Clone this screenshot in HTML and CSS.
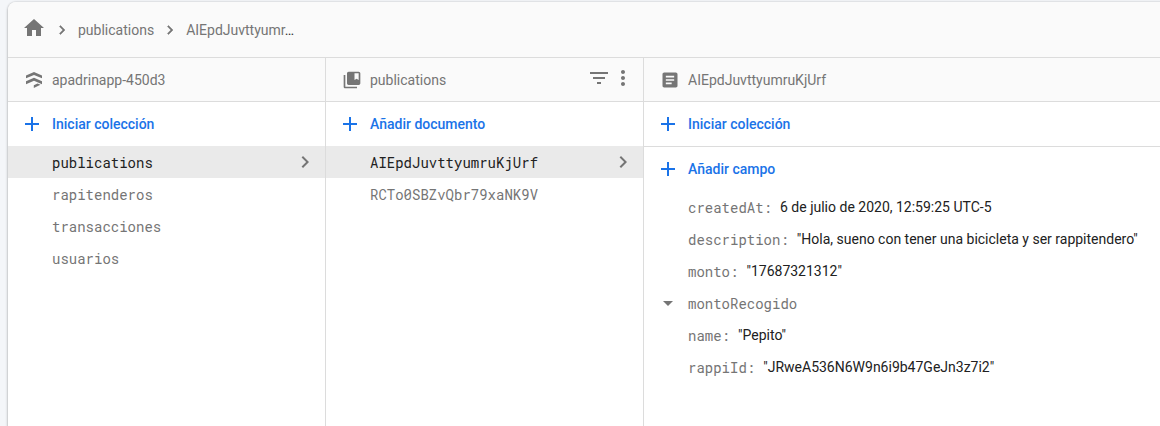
FILE: index.html
```html
<!DOCTYPE html>
<html lang="es">
<head>
<meta charset="utf-8">
<title>Firestore</title>
<link rel="stylesheet" href="styles.css">
</head>
<body>
<svg class="defs" width="0" height="0">
  <symbol id="chevron" viewBox="0 0 24 24"><path d="M10 6 8.59 7.41 13.17 12l-4.58 4.59L10 18l6-6z"/></symbol>
  <symbol id="add" viewBox="0 0 24 24"><path d="M19 13h-6v6h-2v-6H5v-2h6V5h2v6h6v2z"/></symbol>
</svg>
<main class="card">
  <nav class="crumbs">
    <svg class="icon home" viewBox="0 0 24 24"><path d="M10 20v-6h4v6h5v-8h3L12 3 2 12h3v8z"/></svg>
    <svg class="sep"><use href="#chevron"/></svg>
    <span class="crumb">publications</span>
    <svg class="sep"><use href="#chevron"/></svg>
    <span class="crumb">AIEpdJuvttyumr<span class="dots">…</span></span>
  </nav>
  <div class="panels">
    <section class="panel">
      <header class="head">
        <svg class="head-icon" viewBox="0 0 20 20"><path d="M2 5.500 10 2l8 3.500v2.800L10 4.900 2 8.300zM2 11.300l8-3.500 8 3.500v2.900L10 10.800l-8 3.400zM9.800 15.200l3.700-1.700 3 1.300-6.700 3.300z"/></svg>
        <span class="title">apadrinapp-450d3</span>
      </header>
      <div class="add"><svg class="icon"><use href="#add"/></svg><span>Iniciar colección</span></div>
      <div class="item selected"><span>publications</span><svg class="icon"><use href="#chevron"/></svg></div>
      <div class="item"><span>rapitenderos</span></div>
      <div class="item"><span>transacciones</span></div>
      <div class="item"><span>usuarios</span></div>
    </section>
    <section class="panel">
      <header class="head">
        <svg class="head-icon" viewBox="0 0 24 24"><path d="M4 6H2v14c0 1.100.9 2 2 2h14v-2H4V6zM20 2H8c-1.100 0-2 .9-2 2v12c0 1.100.9 2 2 2h12c1.100 0 2-.9 2-2V4c0-1.100-.9-2-2-2zm0 10-2.500-1.500L15 12V4h5v8z"/></svg>
        <span class="title">publications</span>
        <svg class="icon filter" viewBox="0 0 24 24"><path d="M10 18h4v-2h-4v2zM3 6v2h18V6H3zm3 7h12v-2H6v2z"/></svg>
        <svg class="icon more" viewBox="0 0 24 24"><path d="M12 8c1.100 0 2-.9 2-2s-.9-2-2-2-2 .9-2 2 .9 2 2 2zm0 2c-1.100 0-2 .9-2 2s.9 2 2 2 2-.9 2-2-.9-2-2-2zm0 6c-1.100 0-2 .9-2 2s.9 2 2 2 2-.9 2-2-.9-2-2-2z"/></svg>
      </header>
      <div class="add"><svg class="icon"><use href="#add"/></svg><span>Añadir documento</span></div>
      <div class="item selected"><span>AIEpdJuvttyumruKjUrf</span><svg class="icon"><use href="#chevron"/></svg></div>
      <div class="item"><span>RCTo0SBZvQbr79xaNK9V</span></div>
    </section>
    <section class="panel wide">
      <header class="head">
        <svg class="head-icon" viewBox="0 0 24 24"><path d="M19 3H5c-1.100 0-2 .9-2 2v14c0 1.100.9 2 2 2h14c1.100 0 2-.9 2-2V5c0-1.100-.9-2-2-2zm-5 14H7v-2h7v2zm3-4H7v-2h10v2zm0-4H7V7h10v2z"/></svg>
        <span class="title">AIEpdJuvttyumruKjUrf</span>
      </header>
      <div class="add ruled"><svg class="icon"><use href="#add"/></svg><span>Iniciar colección</span></div>
      <div class="add"><svg class="icon"><use href="#add"/></svg><span>Añadir campo</span></div>
      <div class="field"><span class="key">createdAt:</span><span class="value">6 de julio de 2020, 12:59:25 UTC-5</span></div>
      <div class="field"><span class="key">description:</span><span class="value">"Hola, sueno con tener una bicicleta y ser rappitendero"</span></div>
      <div class="field"><span class="key">monto:</span><span class="value">"17687321312"</span></div>
      <div class="field expandable"><svg class="icon" viewBox="0 0 24 24"><path d="m7 10 5 5 5-5z"/></svg><span class="key">montoRecogido</span></div>
      <div class="field"><span class="key">name:</span><span class="value">"Pepito"</span></div>
      <div class="field"><span class="key">rappiId:</span><span class="value">"JRweA536N6W9n6i9b47GeJn3z7i2"</span></div>
    </section>
  </div>
</main>
</body>
</html>
```
FILE: styles.css
```css
* { box-sizing: border-box; }

body {
  margin: 0;
  height: 426px;
  padding: 2px 0 0 8px;
  overflow: hidden;
  background: #f4f6f9;
  color: #757575;
  font: 14px/20px Roboto, "Noto Sans", sans-serif;
}

.defs { display: block; }

svg {
  display: block;
  flex: none;
  fill: #757575;
}

.icon { width: 24px; height: 24px; }

.card {
  display: flex;
  flex-direction: column;
  height: 440px;
  margin-right: -20px;
  border-radius: 8px;
  background: #fff;
  box-shadow: 0 1px 3px rgba(0, 0, 0, .3), 0 0 2px rgba(0, 0, 0, .16);
  overflow: hidden;
}

.crumbs {
  display: flex;
  align-items: center;
  flex: none;
  height: 56px;
  padding-left: 14px;
  border-bottom: 1px solid #dcdcdc;
  background: #fafafa;
}

.home { margin-bottom: 4px; }
.sep {
  width: 18px;
  height: 18px;
  margin: 1px 7px 0 7px;
  stroke: #757575;
  stroke-width: .6px;
}
.crumb { padding-top: 1px; }
.dots { color: #333; }

.panels { display: flex; flex: 1; }

.panel {
  width: 318px;
  border-right: 1px solid #dcdcdc;
}
.wide { flex: 1; border-right: 0; }

.head {
  display: flex;
  align-items: center;
  height: 44px;
  padding-left: 16px;
  border-bottom: 1px solid #dcdcdc;
  background: #fafafa;
}
.head-icon { width: 20px; height: 20px; margin-right: 8px; }
.title { flex: 1; }
.filter { margin-bottom: 3px; }
.more { margin: 0 8px 3px 0; }

.add {
  display: flex;
  align-items: center;
  gap: 8px;
  height: 44px;
  padding-left: 12px;
  color: #1a73e8;
  font-weight: 500;
}
.add svg { fill: #1a73e8; }
.ruled { height: 45px; border-bottom: 1px solid #dcdcdc; }

.item {
  display: flex;
  align-items: center;
  justify-content: space-between;
  height: 32px;
  padding: 0 8px 0 44px;
  font-family: "Roboto Mono", "Liberation Mono", monospace;
}
.item span { padding-top: 2px; }
.selected { background: #eaeaea; color: #212121; }

.field {
  display: flex;
  align-items: center;
  gap: 8px;
  height: 32px;
  padding-left: 44px;
}
.expandable { padding-left: 12px; }
.key {
  padding-top: 1px;
  font-family: "Roboto Mono", "Liberation Mono", monospace;
}
.value { color: #212121; white-space: nowrap; }
```
